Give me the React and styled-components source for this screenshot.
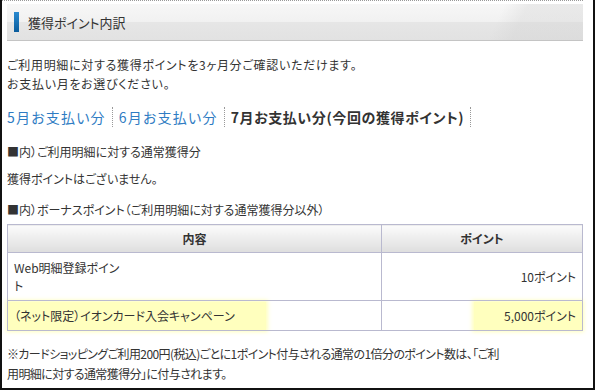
import React from 'react';
import styled, { createGlobalStyle } from 'styled-components';

const GlobalStyle = createGlobalStyle`
    body{
        margin: 0;
        background: #fff;
    }
`

const Frame = styled.div`
    width: 591px;
    height: 388px;
    border-left: 2px solid #111;
    border-right: 2px solid #111;
    border-bottom: 2px solid #111;
    background: #fff;
    font-family: "Noto Sans CJK JP", "Noto Sans", sans-serif;
    font-feature-settings: "palt";
    color: #333;
    overflow: hidden;
`

const Content = styled.div`
    width: 581px;
    border-top: 1px dotted #999;
    padding: 3px 0 0 5px;
    box-sizing: border-box;
`

const Header = styled.div`
    height: 36px;
    display: flex;
    align-items: center;
    gap: 9px;
    padding-left: 7px;
    background:
        linear-gradient(115deg, rgba(255,255,255,0) 0%, rgba(255,255,255,0) 84%, rgba(210,210,210,0.35) 88%, rgba(210,210,210,0.35) 100%),
        linear-gradient(to bottom, #f7f7f7 0%, #f1f1f1 50%, #e6e6e6 51%, #e2e2e2 100%);
    border-bottom: 1px solid #c4c4c4;
    font-size: 13px;
    color: #333;
    .bar{
        width: 5px;
        height: 20px;
        background: linear-gradient(to bottom, #2a8ad0, #0a5c9c);
    }
`

const Para = styled.p`
    margin: ${props => props.margin || "0"};
    font-size: 12px;
    line-height: ${props => props.lh || "19px"};
    letter-spacing: ${props => props.ls || "0"};
    white-space: nowrap;
`

const Tabs = styled.div`
    display: flex;
    align-items: center;
    margin-top: 13px;
    height: 22px;
`

const Tab = styled.span`
    font-size: 14px;
    letter-spacing: ${props => props.active ? "0.6px" : "1.2px"};
    font-weight: ${props => props.active ? "bold" : "normal"};
    color: ${props => props.active ? "#333" : "#2f7cc3"};
    padding-right: 6px;
    margin-right: 6px;
    border-right: 1px dotted #999;
    line-height: 20px;
`

const Table = styled.table`
    width: 576px;
    border-collapse: collapse;
    margin-top: 5px;
    font-size: 12px;
    th{
        height: 27px;
        background: linear-gradient(to bottom, #fbfbfb, #dedede);
        border: 1px solid #b9b9cf;
        font-weight: bold;
        color: #333;
        padding: 0;
    }
    td{
        border: 1px solid #b9b9cf;
        padding: 0 6px;
        line-height: 18px;
    }
`

const Row = styled.tr`
    height: ${props => props.h}px;
`

const Glow = styled.span`
    display: block;
    background: #ffffbe;
    box-shadow: 0 0 4px 2px #ffffbe;
    padding: 5px 6px;
    line-height: 18px;
    text-align: ${props => props.align || "left"};
    width: ${props => props.w}px;
    margin-left: ${props => props.ml || "0"};
    box-sizing: border-box;
`

const App = () => {
    return (
        <>
            <GlobalStyle />
            <Frame>
                <Content>
                    <Header>
                        <div className="bar"></div>
                        獲得ポイント内訳
                    </Header>
                    <Para margin="14px 0 0 0" ls="0.7px">
                        ご利用明細に対する獲得ポイントを3ヶ月分ご確認いただけます。<br />
                        お支払い月をお選びください。
                    </Para>
                    <Tabs>
                        <Tab>5月お支払い分</Tab>
                        <Tab>6月お支払い分</Tab>
                        <Tab active>7月お支払い分(今回の獲得ポイント)</Tab>
                    </Tabs>
                    <Para margin="14px 0 0 0">■内）ご利用明細に対する通常獲得分</Para>
                    <Para margin="8px 0 0 0">獲得ポイントはございません。</Para>
                    <Para margin="12px 0 0 0">■内）ボーナスポイント（ご利用明細に対する通常獲得分以外）</Para>
                    <Table>
                        <thead>
                            <tr>
                                <th style={{ width: 373 }}>内容</th>
                                <th>ポイント</th>
                            </tr>
                        </thead>
                        <tbody>
                            <Row h={48}>
                                <td>Web明細登録ポイン<br />ト</td>
                                <td style={{ textAlign: "right" }}>10ポイント</td>
                            </Row>
                            <Row h={30}>
                                <td style={{ padding: 0 }}>
                                    <Glow w={258}>（ネット限定）イオンカード入会キャンペーン</Glow>
                                </td>
                                <td style={{ padding: 0 }}>
                                    <Glow w={108} align="right" ml="auto">5,000ポイント</Glow>
                                </td>
                            </Row>
                        </tbody>
                    </Table>
                    <Para margin="13px 0 0 0" lh="20px" ls="-0.6px">
                        ※カードショッピングご利用200円(税込)ごとに1ポイント付与される通常の1倍分のポイント数は、「ご利<br />
                        用明細に対する通常獲得分」に付与されます。
                    </Para>
                </Content>
            </Frame>
        </>
    );
}

export default App;
